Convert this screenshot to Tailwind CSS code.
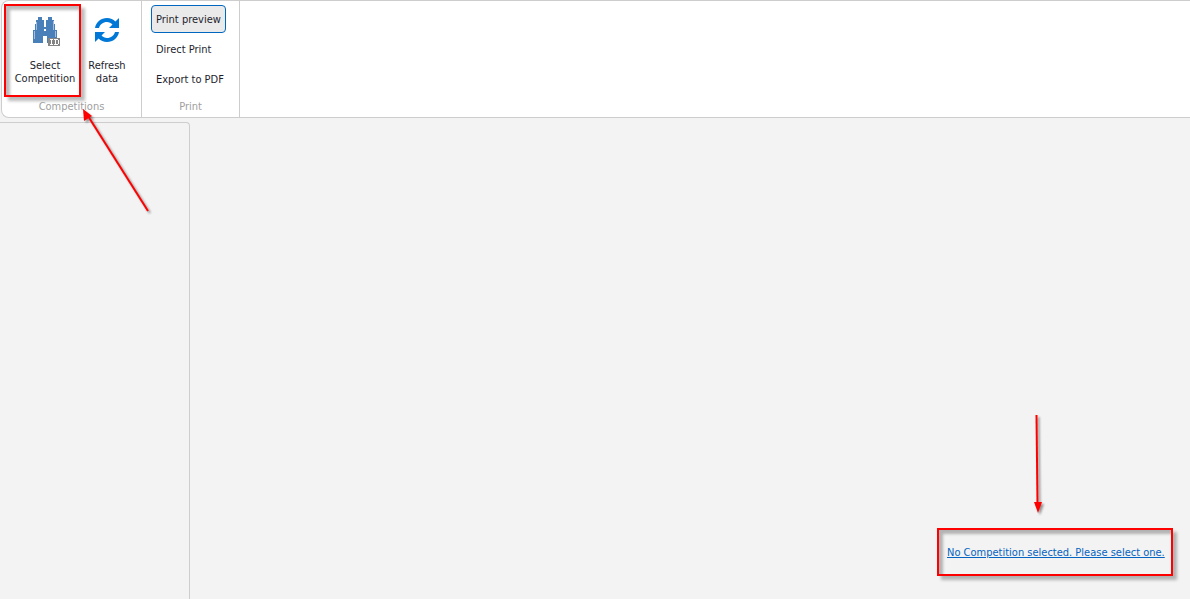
<!DOCTYPE html>
<html lang="en">
<head>
    <meta charset="UTF-8">
    <meta name="viewport" content="width=device-width, initial-scale=1.0">
    <title>Competition Reports</title>
    <script src="https://cdn.jsdelivr.net/npm/@tailwindcss/browser@4"></script>
</head>
<body class="relative flex flex-col min-h-screen overflow-hidden bg-[#f3f3f3] font-['Tahoma','DejaVu_Sans_Condensed','Noto_Sans',sans-serif] text-[11px] leading-[13px] text-[#1e1e2d]">

    <!-- Ribbon -->
    <header class="flex bg-white border-t border-l border-b border-[#cdcdcd] rounded-l-lg ml-px">
        <section class="flex flex-col w-[140px] border-r border-[#cdcdcd]" aria-labelledby="group-competitions">
            <div class="flex pl-[2px] pt-[3px]">
                <button type="button" class="flex flex-col items-center w-[77px] h-[93px] pt-[10px] pl-[5px] border-2 border-[#ff0000] shadow-[4px_4px_3px_#0004,inset_4px_4px_3px_#0004]">
                    <svg class="w-[30px] h-[30px] mb-[13px]" viewBox="-2 0 30 30" shape-rendering="crispEdges" aria-hidden="true">
                        <path fill="#4a80b9" d="M6 1h4v3h2v7h2V4h2V1h4v3h2v4h1v6h2v13H15v-7h-4v7H1V14h2V8h1V4h2z"/>
                        <path fill="#fff" d="M12 13h2v2h-2z"/>
                        <path fill="#a3bfdd" d="M4 6h1v8H4zM2 15h1v8H2zM21 5h1v9h-1zM23 15h1v6h-1z"/>
                        <path fill="#858585" d="M16 22h12v8H16z"/>
                        <path fill="#fff" d="M18 23h3v1h-1v4h1v1h-3v-1h1v-4h-1zM22 23h4v1h-2v4h2v1h-4v-1h1v-4h-1zM26 24h1v4h-1z"/>
                    </svg>
                    <span>Select<br>Competition</span>
                </button>
                <button type="button" class="flex flex-col items-center w-[52px] pt-[13px]">
                    <svg class="w-[26px] h-[26px] mb-[16px]" viewBox="0 0 26 26" aria-hidden="true">
                        <g fill="#0078d7">
                            <path d="M1 11C2 5 7 1 13 1c3.500 0 6.300 1.300 8.400 3.500L25 1v10H15l3.500-3.500C17 6 15.200 5 13 5c-4 0-7 2.500-8 6z"/>
                            <path d="M25 15c-1 6-6 10-12 10-3.500 0-6.300-1.300-8.400-3.500L1 25V15h10l-3.500 3.500C9 20 10.800 21 13 21c4 0 7-2.500 8-6z"/>
                        </g>
                    </svg>
                    <span>Refresh<br>data</span>
                </button>
            </div>
            <h2 id="group-competitions" class="mt-[3px] pb-1 text-center text-[#a0a0a0]">Competitions</h2>
        </section>

        <section class="flex flex-col w-[98px] border-r border-[#cdcdcd]" aria-labelledby="group-print">
            <div class="flex flex-col items-start gap-[2px] pt-1 pl-[9px] whitespace-nowrap">
                <button type="button" aria-pressed="true" class="w-[75px] h-7 px-1 text-left rounded border border-[#0067c0] bg-[#eaeaea]">Print preview</button>
                <button type="button" class="h-7 px-[5px]">Direct Print</button>
                <button type="button" class="h-7 px-[5px]">Export to PDF</button>
            </div>
            <h2 id="group-print" class="mt-auto pb-1 text-center text-[#a0a0a0]">Print</h2>
        </section>
    </header>

    <main class="flex grow pt-1">
        <aside class="w-[190px] border-t border-r border-[#cdcdcd] rounded-tr"></aside>
        <div class="flex grow items-end justify-end pr-[17px] pb-[23px]">
            <div class="flex items-center w-[236px] h-12 pt-px pl-2 border-2 border-[#ff0000] shadow-[4px_4px_3px_#0004,inset_4px_4px_3px_#0004]">
                <a href="#" class="text-[#0563c1] underline whitespace-nowrap">No Competition selected. Please select one.</a>
            </div>
        </div>
    </main>

    <!-- Callout arrows -->
    <svg class="absolute left-[80px] top-[105px] w-[80px] h-[120px] drop-shadow-[2px_2px_1px_#0006]" viewBox="0 0 80 120" aria-hidden="true">
        <path d="M8 11L68 106" stroke="#ff0000" stroke-width="2"/>
        <path d="M3 4l9 7-8 5z" fill="#ff0000"/>
    </svg>
    <svg class="absolute right-[140px] bottom-[74px] w-5 h-[112px] drop-shadow-[2px_2px_1px_#0006]" viewBox="0 0 20 112" aria-hidden="true">
        <path d="M6.500 2l1 90" stroke="#ff0000" stroke-width="2"/>
        <path d="M4 89h8l-4 11z" fill="#ff0000"/>
    </svg>
</body>
</html>
